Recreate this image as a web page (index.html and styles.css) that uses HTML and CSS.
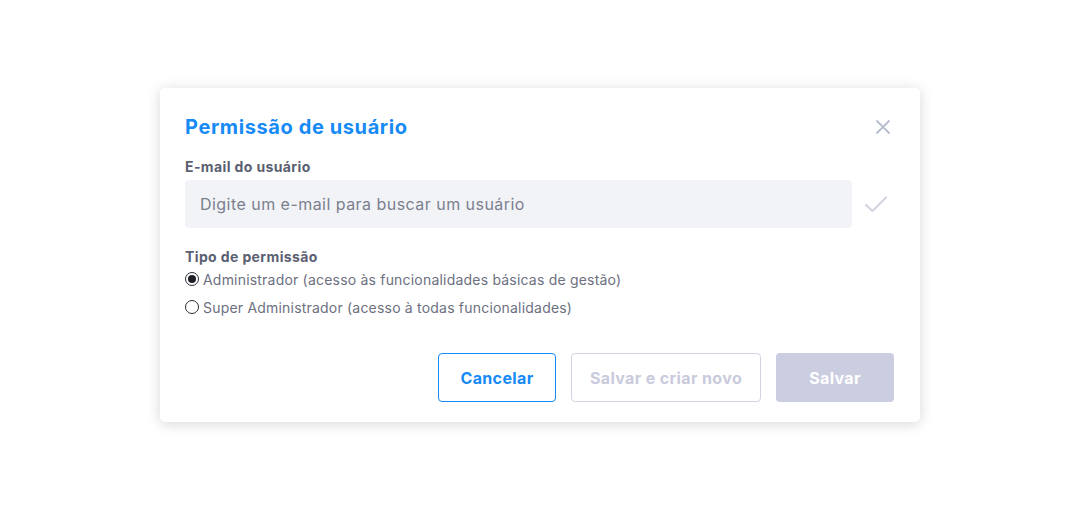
FILE: index.html
```html
<!DOCTYPE html>
<html lang="pt-BR">
<head>
<meta charset="utf-8">
<title>Permissão de usuário</title>
<link rel="stylesheet" href="styles.css">
</head>
<body>
<div class="overlay">
  <div class="modal">
    <div class="modal-header">
      <h2 class="modal-title">Permissão de usuário</h2>
      <button class="close-btn" aria-label="Fechar">
        <svg width="16" height="16" viewBox="0 0 16 16"><path d="M2 2 L14 14 M14 2 L2 14" stroke="#b8bccf" stroke-width="1.8" stroke-linecap="round" fill="none"/></svg>
      </button>
    </div>
    <div class="field">
      <label class="field-label">E-mail do usuário</label>
      <div class="input-row">
        <div class="input">Digite um e-mail para buscar um usuário</div>
        <div class="check">
          <svg width="24" height="20" viewBox="0 0 24 20"><path d="M2 11 L8.5 17 L22 3.5" stroke="#d3d6df" stroke-width="2.2" stroke-linecap="round" stroke-linejoin="round" fill="none"/></svg>
        </div>
      </div>
    </div>
    <div class="perm">
      <div class="field-label">Tipo de permissão</div>
      <div class="radios">
        <div class="radio-row"><span class="radio checked"></span><span>Administrador (acesso às funcionalidades básicas de gestão)</span></div>
        <div class="radio-row"><span class="radio"></span><span>Super Administrador (acesso à todas funcionalidades)</span></div>
      </div>
    </div>
    <div class="actions">
      <button class="btn btn-outline">Cancelar</button>
      <button class="btn btn-disabled-outline">Salvar e criar novo</button>
      <button class="btn btn-disabled">Salvar</button>
    </div>
  </div>
</div>
</body>
</html>
```

FILE: styles.css
```css
* { box-sizing: border-box; }
html, body {
  margin: 0;
  padding: 0;
  background: #ffffff;
  font-family: "Inter", "Open Sans", sans-serif;
}
.overlay {
  width: 1080px;
  height: 510px;
  display: flex;
  align-items: center;
  justify-content: center;
}
.modal {
  width: 760px;
  height: 334px;
  background: #fff;
  border-radius: 5px;
  box-shadow: 0 2px 14px rgba(0, 0, 0, 0.16);
  padding: 25px 25px 20px 25px;
  display: flex;
  flex-direction: column;
}
.modal-header {
  display: flex;
  justify-content: space-between;
  align-items: center;
  height: 28px;
}
.modal-title {
  margin: 0;
  font-size: 20px;
  line-height: 28px;
  font-weight: 700;
  color: #168af5;
  letter-spacing: 0.6px;
}
.close-btn {
  border: none;
  background: none;
  padding: 0;
  margin-right: 4px;
  width: 16px;
  height: 16px;
  display: flex;
}
.field {
  margin-top: 16px;
  display: flex;
  flex-direction: column;
}
.field-label {
  font-size: 14px;
  line-height: 20px;
  font-weight: 700;
  color: #5b5f72;
  letter-spacing: 0.38px;
}
.input-row {
  display: flex;
  align-items: center;
  margin-top: 3px;
}
.input {
  width: 667px;
  height: 48px;
  background: #f2f3f7;
  border-radius: 4px;
  padding-left: 15px;
  display: flex;
  align-items: center;
  font-size: 16px;
  color: #7b7f8e;
  letter-spacing: 0.46px;
}
.check {
  flex: 1;
  display: flex;
  justify-content: center;
  padding-left: 4px;
}
.perm {
  margin-top: 19px;
  display: flex;
  flex-direction: column;
}
.radios {
  display: flex;
  flex-direction: column;
  gap: 4px;
}
.radio-row {
  display: flex;
  align-items: center;
  gap: 4px;
  height: 24px;
  font-size: 14px;
  color: #6c7080;
  letter-spacing: 0.2px;
}
.radio {
  width: 14px;
  height: 14px;
  border-radius: 50%;
  border: 1.3px solid #2b2d36;
  display: flex;
  align-items: center;
  justify-content: center;
}
.radio.checked::after {
  content: "";
  width: 8px;
  height: 8px;
  border-radius: 50%;
  background: #1d1f26;
}
.actions {
  margin-top: auto;
  display: flex;
  justify-content: flex-end;
  gap: 15px;
  padding-right: 1px;
}
.btn {
  height: 49px;
  border-radius: 4px;
  font-family: inherit;
  font-size: 16px;
  font-weight: 700;
  padding: 0;
  letter-spacing: 0.37px;
}
.btn-outline {
  width: 118px;
  background: #fff;
  border: 1.5px solid #168af5;
  color: #168af5;
}
.btn-disabled-outline {
  width: 190px;
  background: #fff;
  border: 1.5px solid #d2d4e3;
  color: #c9cbdc;
}
.btn-disabled {
  width: 118px;
  background: #cbcde0;
  border: none;
  color: #fff;
}
```
